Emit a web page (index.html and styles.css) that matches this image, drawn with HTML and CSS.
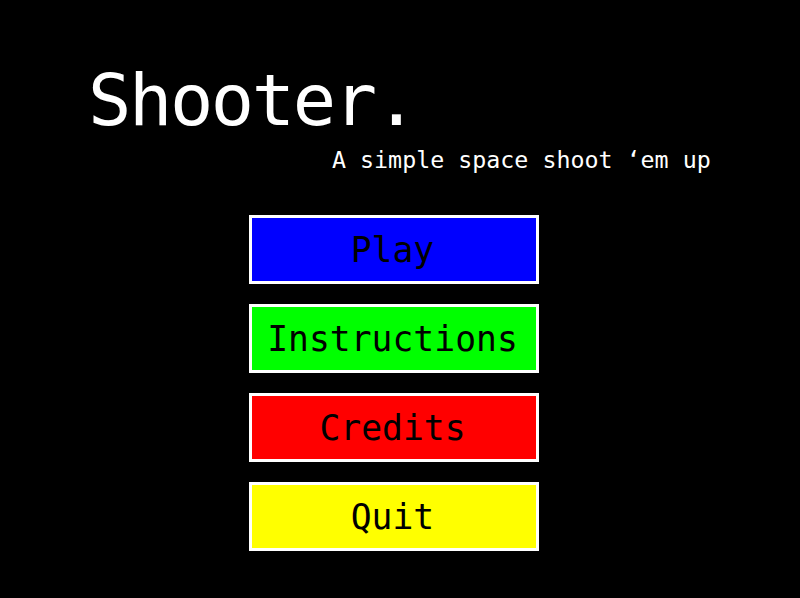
FILE: index.html
```html
<!DOCTYPE html>
<html>
<head>
<meta charset="utf-8">
<link rel="stylesheet" href="styles.css">
</head>
<body>
<div class="screen">
  <header class="header">
    <h1 class="title">Shooter.</h1>
    <p class="subtitle">A simple space shoot ‘em up</p>
  </header>
  <nav class="menu">
    <div class="btn btn-play">Play</div>
    <div class="btn btn-instr">Instructions</div>
    <div class="btn btn-credits">Credits</div>
    <div class="btn btn-quit">Quit</div>
  </nav>
</div>
</body>
</html>
```
FILE: styles.css
```css
html, body {
  margin: 0;
  padding: 0;
  background: #000;
}
.screen {
  width: 800px;
  height: 598px;
  background: #000;
  font-family: "DejaVu Sans Mono", monospace;
  color: #fff;
  display: flex;
  flex-direction: column;
  padding-top: 64px;
  box-sizing: border-box;
}
.header {
  display: flex;
  flex-direction: column;
}
.title {
  margin: 0 0 0 88px;
  font-size: 72px;
  line-height: 72px;
  font-weight: normal;
  letter-spacing: -2.4px;
}
.subtitle {
  margin: 12px 0 0 332px;
  font-size: 23.3px;
  line-height: 24px;
}
.menu {
  margin-top: 43px;
  margin-left: 249px;
  display: flex;
  flex-direction: column;
  gap: 20px;
}
.btn {
  width: 290px;
  height: 69px;
  box-sizing: border-box;
  border: 3px solid #fff;
  padding-right: 3px;
  color: #000;
  font-size: 34.7px;
  display: flex;
  align-items: center;
  justify-content: center;
}
.btn-play { background: #0000ff; }
.btn-instr { background: #00ff00; }
.btn-credits { background: #ff0000; }
.btn-quit { background: #ffff00; }
```
